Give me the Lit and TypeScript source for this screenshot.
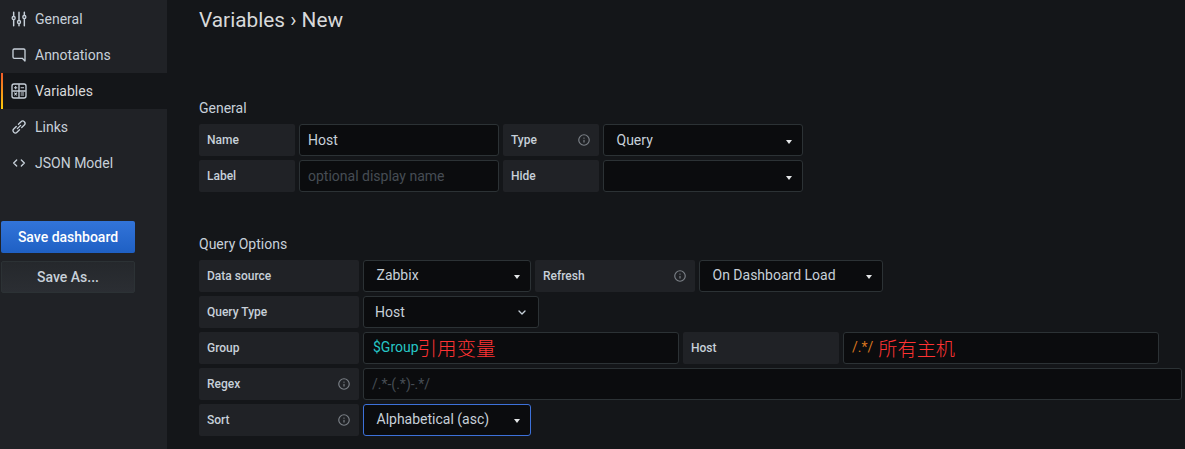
import { LitElement, html, css, svg } from 'lit';
import { customElement } from 'lit/decorators.js';

const infoIcon = html`<svg class="info" viewBox="0 0 24 24"><path fill="currentColor" d="M12,2A10,10,0,1,0,22,12,10,10,0,0,0,12,2Zm0,18a8,8,0,1,1,8-8A8,8,0,0,1,12,20Zm0-8.5a1,1,0,0,0-1,1v3a1,1,0,0,0,2,0v-3A1,1,0,0,0,12,11.5Zm0-4a1.25,1.25,0,1,0,1.25,1.25A1.25,1.25,0,0,0,12,7.5Z"/></svg>`;

const navIcons = {
    general: svg`<path fill="none" stroke="currentColor" stroke-width="2.2" stroke-linecap="round" d="M4 2v5.5M4 14v8M12 2v11M12 20v2M20 2v3.5M20 12.5v9.5"/><circle cx="4" cy="10.5" r="2.3" fill="none" stroke="currentColor" stroke-width="2"/><circle cx="12" cy="16.5" r="2.3" fill="none" stroke="currentColor" stroke-width="2"/><circle cx="20" cy="9" r="2.3" fill="none" stroke="currentColor" stroke-width="2"/>`,
    annotations: svg`<path fill="currentColor" d="M19,2H5A3,3,0,0,0,2,5V15a3,3,0,0,0,3,3H16.59l3.7,3.71A1,1,0,0,0,21,22a.84.84,0,0,0,.38-.08A1,1,0,0,0,22,21V5A3,3,0,0,0,19,2Zm1,16.59-2.29-2.3A1,1,0,0,0,17,16H5a1,1,0,0,1-1-1V5A1,1,0,0,1,5,4H19a1,1,0,0,1,1,1Z"/>`,
    variables: svg`<rect x="1.5" y="1.5" width="21" height="21" rx="3" fill="none" stroke="currentColor" stroke-width="2"/><path fill="none" stroke="currentColor" stroke-width="2" d="M12 2v20M2 12h20"/><path fill="none" stroke="currentColor" stroke-width="1.6" d="M4.5 7h5M7 4.5v5M14.5 7h5M14.5 15h5M14.5 18h5M5 14.5l4 4M9 14.5l-4 4"/>`,
    links: svg`<path fill="currentColor" d="M12.11,15.39,8.23,19.27a2.47,2.47,0,0,1-3.5,0,2.46,2.46,0,0,1,0-3.5l3.88-3.88a1,1,0,1,0-1.42-1.42L3.31,14.36a4.48,4.48,0,0,0,6.33,6.33l3.89-3.88a1,1,0,0,0-1.42-1.42ZM20.69,3.31a4.49,4.49,0,0,0-6.33,0L10.47,7.19a1,1,0,1,0,1.42,1.42l3.88-3.88a2.47,2.47,0,0,1,3.5,0,2.46,2.46,0,0,1,0,3.5l-3.88,3.88a1,1,0,0,0,0,1.42,1,1,0,0,0,1.42,0l3.88-3.89A4.49,4.49,0,0,0,20.69,3.31ZM8.83,15.17a1,1,0,0,0,.71.29,1,1,0,0,0,.71-.29l4.92-4.92a1,1,0,1,0-1.42-1.42L8.83,13.75A1,1,0,0,0,8.83,15.17Z"/>`,
    json: svg`<path fill="none" stroke="currentColor" stroke-width="2" stroke-linecap="round" stroke-linejoin="round" d="M8.5 7.5 4 12l4.5 4.5M15.5 7.5 20 12l-4.5 4.5"/>`,
};

const navItems = [
    { id: 'general', text: 'General' },
    { id: 'annotations', text: 'Annotations' },
    { id: 'variables', text: 'Variables', active: true },
    { id: 'links', text: 'Links' },
    { id: 'json', text: 'JSON Model' },
] as const;

@customElement('app-root')
export class AppRoot extends LitElement {
    static styles = css`
        :host {
            display: flex;
            width: 1185px;
            height: 449px;
            overflow: hidden;
            background: #141619;
            color: #c7d0d9;
            font-family: Roboto, "Noto Sans CJK SC", sans-serif;
            font-size: 14px;
        }
        .sidebar {
            width: 167px;
            flex: none;
            padding-top: 1px;
            background: #202226;
            box-sizing: border-box;
        }
        .nav-item {
            display: flex;
            align-items: center;
            height: 36px;
            padding-left: 11px;
            gap: 8px;
            position: relative;
        }
        .nav-item svg { width: 16px; height: 16px; color: #c7d0d9; }
        .nav-item.active { background: #141619; color: #d8d9da; }
        .nav-item.active::before {
            content: '';
            position: absolute;
            left: 1px;
            top: 0;
            bottom: 0;
            width: 2px;
            background: linear-gradient(#f05a28, #fbca0a);
        }
        .actions {
            display: flex;
            flex-direction: column;
            gap: 8px;
            width: 134px;
            margin: 40px 0 0 1px;
        }
        .btn {
            height: 32px;
            box-sizing: border-box;
            display: flex;
            align-items: center;
            justify-content: center;
            border-radius: 2px;
            font-weight: 500;
            font-size: 14px;
        }
        .btn.primary {
            color: #fff;
            background: linear-gradient(#3274d9, #1f60c4);
        }
        .btn.secondary {
            color: #c7d0d9;
            background: linear-gradient(#25282c, #2b2e33);
            border: 1px solid #2c3235;
        }
        .main {
            flex: 1;
            min-width: 0;
            padding-left: 32px;
        }
        h1 {
            margin: 8px 0 0;
            font-size: 20.8px;
            line-height: 24px;
            font-weight: 400;
            color: #d8d9da;
        }
        h2 {
            margin: 0 0 7px;
            font-size: 14px;
            line-height: 17px;
            font-weight: 400;
            color: #c7d0d9;
        }
        .general { margin-top: 68px; }
        .query { margin-top: 44px; }
        .rows { display: flex; flex-direction: column; gap: 4px; }
        .row { display: flex; gap: 4px; }
        .label {
            box-sizing: border-box;
            height: 32px;
            padding: 0 8px;
            display: flex;
            align-items: center;
            justify-content: space-between;
            background: #202226;
            border-radius: 2px;
            font-size: 12px;
            font-weight: 500;
        }
        .info { width: 14px; height: 14px; color: #7b8087; }
        .field {
            box-sizing: border-box;
            height: 32px;
            display: flex;
            align-items: center;
            background: #0b0c0e;
            border: 1px solid #2c3235;
            border-radius: 3px;
            padding: 0 8px;
            position: relative;
            white-space: nowrap;
        }
        .field.select { padding-left: 12.5px; justify-content: space-between; }
        .field.select::after {
            content: '';
            position: absolute;
            right: 10px;
            top: 15px;
            border-left: 3px solid transparent;
            border-right: 3px solid transparent;
            border-top: 4px solid #e4e6e8;
        }
        .field.select.raised { padding-bottom: 2px; }
        .field.select.raised::after { top: 14px; }
        .field.select.plain { padding-left: 11px; }
        .field.plain::after { display: none; }
        .field.focus { border-color: #3d71d9; }
        .angle { width: 16px; height: 16px; color: #c7d0d9; }
        .placeholder { color: #464c54; }
        .w96 { width: 96px; }
        .w156 { width: 156px; }
        .w160 { width: 160px; }
        .w168 { width: 168px; }
        .w176 { width: 176px; }
        .w184 { width: 184px; }
        .w200 { width: 200px; }
        .w316 { width: 316px; }
        .w819 { width: 819px; }
        .var { color: #26c6c6; margin: 0 -1px 2px 1px; }
        .regex { color: #d8751f; margin: 0 5px 2px 0; }
        .note { color: #ff3333; font-size: 19.5px; line-height: 24px; font-weight: 300; margin-top: 4px; }
        .note.small { font-size: 19.2px; }
    `;

    render() {
        return html`
            <aside class="sidebar">
                ${navItems.map(item => html`
                    <div class="nav-item ${item.id === 'variables' ? 'active' : ''}">
                        <svg viewBox="0 0 24 24">${navIcons[item.id]}</svg>
                        <span>${item.text}</span>
                    </div>
                `)}
                <div class="actions">
                    <div class="btn primary">Save dashboard</div>
                    <div class="btn secondary">Save As...</div>
                </div>
            </aside>
            <main class="main">
                <h1>Variables › New</h1>
                <section class="general">
                    <h2>General</h2>
                    <div class="rows">
                        <div class="row">
                            <div class="label w96">Name</div>
                            <div class="field w200">Host</div>
                            <div class="label w96">Type ${infoIcon}</div>
                            <div class="field select w200">Query</div>
                        </div>
                        <div class="row">
                            <div class="label w96">Label</div>
                            <div class="field w200"><span class="placeholder">optional display name</span></div>
                            <div class="label w96">Hide</div>
                            <div class="field select w200"></div>
                        </div>
                    </div>
                </section>
                <section class="query">
                    <h2>Query Options</h2>
                    <div class="rows">
                        <div class="row">
                            <div class="label w160">Data source</div>
                            <div class="field select raised w168">Zabbix</div>
                            <div class="label w160">Refresh ${infoIcon}</div>
                            <div class="field select raised w184">On Dashboard Load</div>
                        </div>
                        <div class="row">
                            <div class="label w160">Query Type</div>
                            <div class="field select plain w176">
                                Host
                                <svg class="angle" viewBox="0 0 24 24"><path fill="none" stroke="currentColor" stroke-width="2" stroke-linecap="round" stroke-linejoin="round" d="M7.5 10.5 12 15l4.5-4.5"/></svg>
                            </div>
                        </div>
                        <div class="row">
                            <div class="label w160">Group</div>
                            <div class="field w316"><span class="var">$Group</span><span class="note">引用变量</span></div>
                            <div class="label w156">Host</div>
                            <div class="field w316"><span class="regex">/.*/</span><span class="note small">所有主机</span></div>
                        </div>
                        <div class="row">
                            <div class="label w160">Regex ${infoIcon}</div>
                            <div class="field w819"><span class="placeholder">/.*-(.*)-.*/</span></div>
                        </div>
                        <div class="row">
                            <div class="label w160">Sort ${infoIcon}</div>
                            <div class="field select raised focus w168">Alphabetical (asc)</div>
                        </div>
                    </div>
                </section>
            </main>
        `;
    }
}

declare global {
    interface HTMLElementTagNameMap {
        'app-root': AppRoot;
    }
}
